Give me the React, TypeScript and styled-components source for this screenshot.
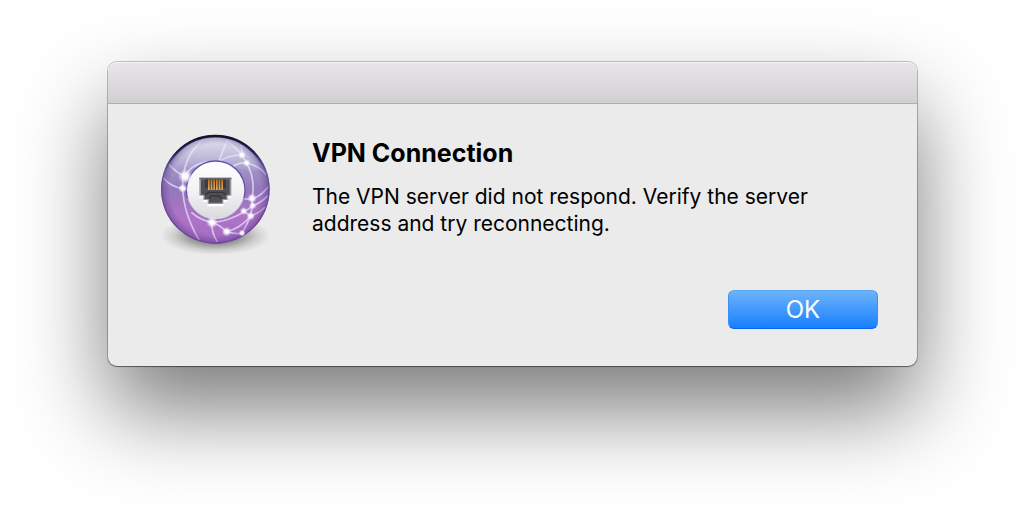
import React from "react";
import styled, { createGlobalStyle } from "styled-components";

const GlobalStyle = createGlobalStyle`
  *, *::before, *::after { box-sizing: border-box; }
  body {
    margin: 0;
    background: #fff;
    color: #000;
    font-family: Inter, "Liberation Sans", sans-serif;
  }
`;

const Page = styled.main`
  min-height: 100vh;
  padding: 62px 107px 62px 108px;
  overflow: hidden;
`;

const Dialog = styled.section`
  border-radius: 9px;
  background: #ebebeb;
  box-shadow:
    0 0 0 1px rgba(0, 0, 0, 0.22),
    0 1px 1px rgba(0, 0, 0, 0.35),
    0 44px 88px rgba(0, 0, 0, 0.52);
`;

const TitleBar = styled.header`
  height: 42px;
  border-bottom: 1px solid #b0aeb0;
  border-radius: 9px 9px 0 0;
  background: linear-gradient(#e8e6e8, #d1cfd1);
  box-shadow: inset 0 1px 0 #f6f5f6;
`;

const Content = styled.div`
  display: flex;
  align-items: flex-start;
  gap: 32px;
  padding: 21px 39px 0 42px;
`;

const IconArt = styled.svg`
  flex: none;
  width: 130px;
  height: 135px;
`;

const Message = styled.div`
  flex: 1;
  padding-top: 12px;
`;

const Title = styled.h1`
  margin: 0 0 14px;
  font-size: 25px;
  line-height: 32px;
  font-weight: 700;
`;

const Description = styled.p`
  max-width: 520px;
  margin: 0;
  font-size: 21px;
  line-height: 27px;
`;

const Actions = styled.footer`
  display: flex;
  justify-content: flex-end;
  padding: 30px 39px 37px;
`;

const PrimaryButton = styled.button`
  width: 150px;
  height: 39px;
  padding: 0;
  border: 1px solid;
  border-color: #5aa8f8 #3a90f8 #0a62f5;
  border-radius: 6px;
  background: linear-gradient(#6db3fa, #1780ff);
  color: #fff;
  font: 400 24px/37px Inter, "Liberation Sans", sans-serif;
`;

const threads = [
  "M168 36 C120 75 96 120 98 190 C100 250 120 300 150 350",
  "M48 108 C70 135 88 148 106 154 C116 130 140 116 172 110",
  "M40 158 C58 180 78 188 98 190 L120 196",
  "M228 46 C256 64 274 84 290 114 C310 150 312 190 306 220",
  "M236 36 C226 60 214 84 208 108",
  "M274 60 C276 75 276 84 276 90 C250 90 222 98 206 112",
  "M290 114 C315 120 335 130 348 150",
  "M290 114 C270 112 255 118 246 128",
  "M354 186 C338 206 320 218 306 222 C296 224 286 222 278 218",
  "M354 212 C336 230 322 238 308 242 C290 258 240 290 186 292",
  "M306 220 C310 250 304 280 276 324",
  "M280 258 L302 273 C280 300 254 314 230 320",
  "M302 273 C320 268 334 258 346 246",
  "M186 292 C210 300 218 310 230 320 C250 326 262 328 276 324",
  "M124 262 C142 278 164 288 186 292 C184 312 190 332 202 350",
];

const nodes = [
  [106, 154, 23],
  [98, 190, 14],
  [276, 90, 13],
  [290, 114, 12],
  [306, 220, 15],
  [308, 242, 12],
  [281, 258, 12],
  [302, 273, 13],
  [186, 292, 18],
  [230, 320, 15],
  [276, 324, 11],
];

const contacts = [176, 184, 192, 200, 208, 216];

function NetworkIcon() {
  return (
    <IconArt viewBox="0 0 390 405" aria-hidden="true">
      <defs>
        <linearGradient id="ball" x1="0" y1="0" x2="0" y2="1">
          <stop offset="0" stopColor="#b4b2d0" />
          <stop offset="0.25" stopColor="#a49cca" />
          <stop offset="0.5" stopColor="#9478bc" />
          <stop offset="0.75" stopColor="#ad74c6" />
          <stop offset="1" stopColor="#a46cc2" />
        </linearGradient>
        <radialGradient id="edge">
          <stop offset="0.84" stopColor="#4b2a80" stopOpacity="0" />
          <stop offset="0.96" stopColor="#4b2a80" stopOpacity="0.32" />
          <stop offset="1" stopColor="#3a1e68" stopOpacity="0.65" />
        </radialGradient>
        <linearGradient id="rim" x1="0" y1="0" x2="0" y2="1">
          <stop offset="0" stopColor="#12122e" />
          <stop offset="0.16" stopColor="#25234c" />
          <stop offset="0.34" stopColor="#3a2d70" stopOpacity="0" />
        </linearGradient>
        <linearGradient id="gloss" x1="0" y1="0" x2="0" y2="1">
          <stop offset="0" stopColor="#fff" stopOpacity="0.6" />
          <stop offset="1" stopColor="#fff" stopOpacity="0.06" />
        </linearGradient>
        <radialGradient id="spark">
          <stop offset="0" stopColor="#fff" />
          <stop offset="0.4" stopColor="#fff" stopOpacity="0.9" />
          <stop offset="1" stopColor="#e5d8ff" stopOpacity="0" />
        </radialGradient>
        <radialGradient id="ground">
          <stop offset="0" stopColor="#000" stopOpacity="0.6" />
          <stop offset="0.4" stopColor="#000" stopOpacity="0.4" />
          <stop offset="0.75" stopColor="#000" stopOpacity="0.12" />
          <stop offset="1" stopColor="#000" stopOpacity="0" />
        </radialGradient>
        <linearGradient id="plate" x1="0" y1="0" x2="0" y2="1">
          <stop offset="0" stopColor="#fff" />
          <stop offset="0.5" stopColor="#f3f3f4" />
          <stop offset="1" stopColor="#dadade" />
        </linearGradient>
        <linearGradient id="pin" x1="0" y1="0" x2="0" y2="1">
          <stop offset="0" stopColor="#b8701c" />
          <stop offset="1" stopColor="#f0ae58" />
        </linearGradient>
        <clipPath id="ballClip">
          <circle cx="196" cy="193" r="160" />
        </clipPath>
      </defs>

      <ellipse cx="196" cy="332" rx="165" ry="58" fill="url(#ground)" />
      <circle cx="196" cy="193" r="163" fill="url(#ball)" />
      <g clipPath="url(#ballClip)">
        <path
          d="M196 38 C270 38 318 84 330 132 C290 150 260 118 196 116 C132 118 102 150 62 132 C74 84 122 38 196 38Z"
          fill="url(#gloss)"
        />
        <g fill="none" stroke="#f2ecff" strokeWidth="5" strokeOpacity="0.68">
          {threads.map((d) => (
            <path key={d} d={d} />
          ))}
        </g>
      </g>
      <circle cx="196" cy="193" r="163" fill="url(#edge)" />
      <circle cx="196" cy="193" r="160" fill="none" stroke="url(#rim)" strokeWidth="7" />
      <circle cx="197" cy="196" r="90" fill="#6650ae" />
      <path d="M113 220 A88 88 0 0 0 281 220" fill="none" stroke="#bd9bda" strokeWidth="5" />
      <circle cx="197" cy="196" r="86" fill="url(#plate)" />
      {nodes.map(([x, y, r]) => (
        <circle key={`${x}-${y}`} cx={x} cy={y} r={r} fill="url(#spark)" />
      ))}

      <path
        d="M148 162 H244 V218 H232 V231 H221 V244 H172 V231 H160 V218 H148Z"
        fill="#fff"
      />
      <path
        d="M148 158 H244 V212 H233 V225 H220 V237 H173 V225 H160 V212 H148Z"
        fill="#96979b"
      />
      <path
        d="M153 163 H239 V209 H229 V222 H216 V233 H177 V222 H164 V209 H153Z"
        fill="#505155"
      />
      <path d="M148 158 H244 V163 H148Z" fill="#66676b" />
      <path d="M165 163 H228 V190 H165Z" fill="#3b3a40" />
      <path
        d="M164 209 L176 202 H218 L229 209 M177 222 L184 213 H209 L216 222"
        fill="none"
        stroke="#36373c"
        strokeWidth="4"
      />
      {contacts.map((x) => (
        <rect key={x} x={x - 2} y="163" width="5" height="32" fill="url(#pin)" />
      ))}
    </IconArt>
  );
}

export default function App() {
  return (
    <>
      <GlobalStyle />
      <Page>
        <Dialog role="alertdialog" aria-labelledby="title" aria-describedby="description">
          <TitleBar />
          <Content>
            <NetworkIcon />
            <Message>
              <Title id="title">VPN Connection</Title>
              <Description id="description">
                The VPN server did not respond. Verify the server address and try reconnecting.
              </Description>
            </Message>
          </Content>
          <Actions>
            <PrimaryButton type="button">OK</PrimaryButton>
          </Actions>
        </Dialog>
      </Page>
    </>
  );
}
